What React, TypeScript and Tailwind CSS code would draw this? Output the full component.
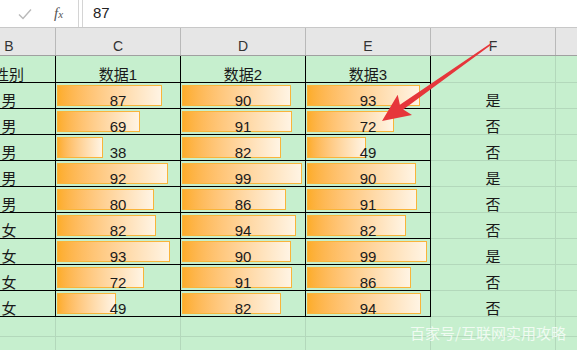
import React from "react";

const rows = [
  { g: "男", c: 87, d: 90, e: 93, f: "是" },
  { g: "男", c: 69, d: 91, e: 72, f: "否" },
  { g: "男", c: 38, d: 82, e: 49, f: "否" },
  { g: "男", c: 92, d: 99, e: 90, f: "是" },
  { g: "男", c: 80, d: 86, e: 91, f: "否" },
  { g: "女", c: 82, d: 94, e: 82, f: "否" },
  { g: "女", c: 93, d: 90, e: 99, f: "是" },
  { g: "女", c: 72, d: 91, e: 86, f: "否" },
  { g: "女", c: 49, d: 82, e: 94, f: "否" },
];

function BarCell({ v }: { v: number }) {
  return (
    <div className="w-[125px] h-full border-r border-b border-black grid">
      <div
        className="col-start-1 row-start-1 self-start mt-[2px] ml-[1px] h-[21px] border border-[#f9b43a] bg-linear-to-r from-[#fdad2a] to-[#fff4e4]"
        style={{ width: `${Math.round(v * 1.21)}px` }}
      />
      <div className="col-start-1 row-start-1 self-end justify-self-center text-[15px] leading-[15px] text-[#1a1a1a]">
        {v}
      </div>
    </div>
  );
}

export default function App() {
  const font = "font-['Liberation_Sans','Noto_Sans_CJK_SC',sans-serif]";
  return (
    <div className={`w-[577px] h-[350px] overflow-hidden relative bg-[#c6efce] ${font}`}>
      {/* formula bar */}
      <div className="h-[28px] bg-white border-b border-[#c8c8c8] flex">
        <div className="w-[79px] h-full flex items-center border-r border-[#d4d4d4]">
          <svg width="14" height="12" viewBox="0 0 14 12" className="ml-[18px]">
            <path d="M1 6.5 L5 10.5 L13 1.5" fill="none" stroke="#b9b9b9" strokeWidth="1.4" />
          </svg>
          <span className="ml-[22px] italic font-['Liberation_Serif',serif] text-[15px] text-[#555] leading-none">
            f<span className="text-[11px]">x</span>
          </span>
        </div>
        <div className="w-[3px] h-full" />
        <div className="flex-1 h-full border-l border-[#d4d4d4] flex items-center pl-[10px] text-[15px] text-[#222]">
          87
        </div>
      </div>

      {/* column headers */}
      <div className="h-[28px] bg-[#e6e6e6] border-b border-[#a0a0a0] flex ml-[-37px] text-[14px] leading-[14px] text-[#333]">
        {["B", "C", "D", "E", "F"].map((l) => (
          <div
            key={l}
            className={`${l === "B" ? "w-[93px]" : "w-[125px]"} h-full border-r border-[#b9b9b9] flex items-end justify-center pb-[2px]`}
          >
            {l}
          </div>
        ))}
        <div className="flex-1 h-full" />
      </div>

      {/* title row */}
      <div className="h-[27px] flex ml-[-37px] text-[15px] leading-[15px] text-[#1a1a1a]">
        <div className="w-[93px] h-full border-r border-b border-black flex items-end justify-center">性别</div>
        {["数据1", "数据2", "数据3"].map((t) => (
          <div key={t} className="w-[125px] h-full border-r border-b border-black flex items-end justify-center">
            {t}
          </div>
        ))}
        <div className="w-[125px] h-full border-r border-b border-[#b3d8bb]" />
        <div className="flex-1 h-full border-b border-[#b3d8bb]" />
      </div>

      {/* data rows */}
      {rows.map((r, i) => (
        <div key={i} className="h-[26px] flex ml-[-37px] text-[15px] leading-[15px] text-[#1a1a1a]">
          <div className="w-[93px] h-full border-r border-b border-black flex items-end justify-center">{r.g}</div>
          <BarCell v={r.c} />
          <BarCell v={r.d} />
          <BarCell v={r.e} />
          <div className="w-[125px] h-full border-r border-b border-[#b3d8bb] flex items-end justify-center">{r.f}</div>
          <div className="flex-1 h-full border-b border-[#b3d8bb]" />
        </div>
      ))}

      {/* empty rows */}
      {[0, 1].map((i) => (
        <div key={i} className="h-[20px] flex ml-[-37px]">
          <div className="w-[93px] h-full border-r border-b border-[#b3d8bb]" />
          <div className="w-[125px] h-full border-r border-b border-[#b3d8bb]" />
          <div className="w-[125px] h-full border-r border-b border-[#b3d8bb]" />
          <div className="w-[125px] h-full border-r border-b border-[#b3d8bb]" />
          <div className="w-[125px] h-full border-r border-b border-[#b3d8bb]" />
          <div className="flex-1 h-full border-b border-[#b3d8bb]" />
        </div>
      ))}

      {/* arrow overlay */}
      <svg className="absolute left-0 top-0 pointer-events-none" width="577" height="350" viewBox="0 0 577 350">
        <polygon
          points="491.6,44.6 403.3,109.6 412,115 382,121 397.7,94.7 399.9,104.7 490.4,43.4"
          fill="#e6363b"
        />
      </svg>

      {/* watermark */}
      <div className="absolute left-[410px] top-[324px] text-[15px] leading-[18px] text-white/75 font-['Noto_Sans_CJK_SC',sans-serif]">
        百家号/互联网实用攻略
      </div>
    </div>
  );
}
